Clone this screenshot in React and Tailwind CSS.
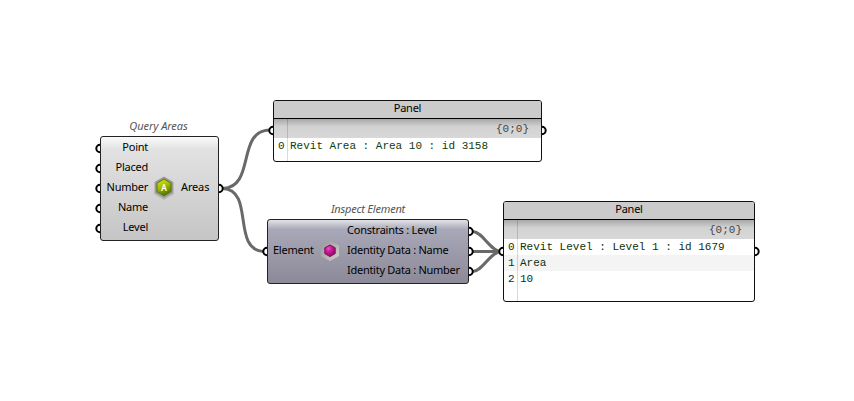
import React from "react";

const WIRES = [
  "M223 188.5C256 187 236 130 270 130",
  "M223 188.5C255 190 231 250 264 251.5",
  "M473 231.5C483 232 490 251 501 251.5",
  "M473 251.5H501",
  "M473 271.5C483 271 490 252 501 251.5",
];

const PORTS = [
  [100, 148], [100, 168], [100, 188], [100, 208], [100, 228],
  [219, 188], [273, 130], [542, 130], [267, 251], [469, 231],
  [469, 251], [469, 271], [503, 251], [755, 251],
];

function Wiring() {
  return (
    <svg className="absolute inset-0" width="854" height="401" fill="none">
      <g stroke="#696969" strokeWidth="3">
        {WIRES.map((d) => <path key={d} d={d} />)}
      </g>
      <g fill="#fff" stroke="#000" strokeWidth="2">
        {PORTS.map(([x, y]) => (
          <circle key={`${x}-${y}`} cx={x} cy={y + 0.5} r="3.7" />
        ))}
      </g>
    </svg>
  );
}

function AreaIcon() {
  return (
    <svg width="24" height="24" viewBox="0 0 24 24" className="block shrink-0">
      <defs>
        <linearGradient id="lime" x1="0.2" y1="0" x2="0.6" y2="1">
          <stop offset="0" stopColor="#d8e60a" />
          <stop offset="0.45" stopColor="#a6bf00" />
          <stop offset="1" stopColor="#466e00" />
        </linearGradient>
      </defs>
      <path d="M12 1L22 6.5V18L12 24L2 18V6.5Z" fill="#777" opacity=".25" />
      <path d="M12 0.5L21 5.8V16.9L12 22.3L3 16.9V5.8Z" fill="#9a9a9a" />
      <path d="M12 3L19 7.2V15.6L12 19.8L5 15.6V7.2Z" fill="url(#lime)" stroke="#56750a" />
      <text x="12" y="14.7" textAnchor="middle" fontFamily="Roboto, sans-serif" fontSize="9" fontWeight="500" fill="#fff">A</text>
    </svg>
  );
}

function ElementIcon() {
  return (
    <svg width="24" height="24" viewBox="0 0 24 24" className="block shrink-0">
      <defs>
        <radialGradient id="magenta" cx="0.35" cy="0.3" r="0.75">
          <stop offset="0" stopColor="#e956c2" />
          <stop offset="0.35" stopColor="#d01d9b" />
          <stop offset="1" stopColor="#850960" />
        </radialGradient>
        <linearGradient id="silver" x1="0" y1="0" x2="1" y2="1">
          <stop offset="0" stopColor="#969696" />
          <stop offset="1" stopColor="#d0d0cc" />
        </linearGradient>
      </defs>
      <path d="M12 1.6L21 6.8V16.9L12 22L3 16.9V6.8Z" fill="url(#silver)" />
      <path d="M12 6L17.2 8.8V14.6L12 17.6L6.8 14.6V8.8Z" fill="url(#magenta)" stroke="#810e60" strokeLinejoin="round" />
    </svg>
  );
}

function Panel({ place, rows, tone }) {
  return (
    <section className={`absolute flex flex-col overflow-hidden rounded-[3px] border border-[#111] bg-white ${place}`}>
      <h2 className="h-[18px] shrink-0 border-b border-black bg-[#cbcbcb] text-center font-['Noto_Sans','Open_Sans',sans-serif] text-[11px] leading-[14px] tracking-[-0.25px]">Panel</h2>
      <div className={`relative flex flex-1 flex-col font-['Liberation_Mono',monospace] text-[11px] leading-4 ${tone}`}>
        <div className="h-[19px] shrink-0 bg-linear-to-b from-[#a8a8a8] via-[#d2d2d2] via-40% to-[#d8d8d8] pr-[12px] text-right leading-[20px] text-[#444]">{"{0;0}"}</div>
        {rows.map((row, i) => (
          <div key={row} className="flex h-4 odd:bg-[#f4f4f4]">
            <span className="w-[13px] shrink-0 pl-1">{i}</span>
            <span className="whitespace-pre pl-[3px]">{row}</span>
          </div>
        ))}
        <div className="absolute inset-y-0 left-[13px] w-px bg-black/15" />
      </div>
    </section>
  );
}

export default function App() {
  return (
    <main className="relative h-[401px] w-[854px] overflow-hidden bg-white font-['Noto_Sans','Open_Sans',sans-serif] text-[11px] text-black">
      <Wiring />

      <div className="absolute left-[99px] top-[118px] w-[119px] text-center text-[11px] italic leading-4 tracking-[-0.05px] text-[#555]">Query Areas</div>
      <section className="absolute left-[100px] top-[136px] flex h-[105px] w-[119px] items-center rounded-[3px] border border-[#222] bg-linear-to-b from-[#fafafa] via-[#e2e2e2] via-12% to-[#c5c5c5]">
        <div className="flex w-[47px] flex-col pb-[3px] text-right leading-5 tracking-[-0.25px]">
          <span>Point</span><span>Placed</span><span>Number</span><span>Name</span><span>Level</span>
        </div>
        <div className="ml-[4px] pb-px"><AreaIcon /></div>
        <span className="ml-[5px] pb-[2px] tracking-[-0.15px]">Areas</span>
      </section>

      <div className="absolute left-[267px] top-[201px] w-[202px] text-center text-[11px] italic leading-4 tracking-[-0.2px] text-[#555]">Inspect Element</div>
      <section className="absolute left-[267px] top-[219px] flex h-[65px] w-[202px] items-center rounded-[3px] border border-[#222] bg-linear-to-b from-[#e2e2e8] via-[#a9a8b8] via-15% to-[#8c8a98]">
        <span className="w-[45px] pb-[2px] pl-[5px] tracking-[-0.25px]">Element</span>
        <div className="ml-[5px] pb-px"><ElementIcon /></div>
        <div className="ml-[5px] flex flex-col whitespace-nowrap pb-[3px] leading-5">
          <span className="tracking-[-0.22px]">Constraints : Level</span><span className="tracking-[-0.27px]">Identity Data : Name</span><span className="tracking-[-0.27px]">Identity Data : Number</span>
        </div>
      </section>

      <Panel place="left-[273px] top-[100px] h-[62px] w-[269px]" tone="text-[#103c08]" rows={["Revit Area : Area 10 : id 3158"]} />
      <Panel place="left-[503px] top-[201px] h-[101px] w-[252px]" tone="text-[#103008]" rows={["Revit Level : Level 1 : id 1679", "Area", "10"]} />
    </main>
  );
}
